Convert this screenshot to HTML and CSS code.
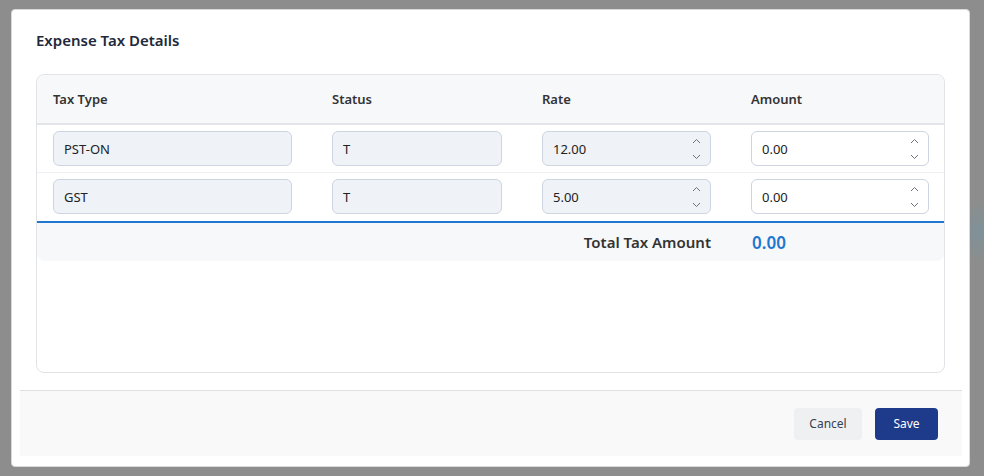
FILE: index.html
```html
<!DOCTYPE html>
<html>
<head>
    <title>Expense Tax Details</title>
    <meta name="viewport" content="width=device-width, initial-scale=1">
    <link rel="stylesheet" href="styles.css">
</head>
<body>
    <div class="backdrop">
        <div class="modal">
            <h2 class="modal-title">Expense Tax Details</h2>

            <div class="tax-table">
                <div class="tax-row tax-head">
                    <div class="cell">Tax Type</div>
                    <div class="cell">Status</div>
                    <div class="cell">Rate</div>
                    <div class="cell">Amount</div>
                </div>

                <div class="tax-row">
                    <div class="cell"><div class="field field-type"><span class="field-value">PST-ON</span></div></div>
                    <div class="cell"><div class="field field-status"><span class="field-value">T</span></div></div>
                    <div class="cell">
                        <div class="field field-rate">
                            <span class="field-value">12.00</span>
                            <span class="spinner">
                                <svg width="9" height="6" viewBox="0 0 9 6"><path d="M1 5 L4.5 1.5 L8 5" /></svg>
                                <svg width="9" height="6" viewBox="0 0 9 6"><path d="M1 1 L4.5 4.5 L8 1" /></svg>
                            </span>
                        </div>
                    </div>
                    <div class="cell">
                        <div class="field field-amount">
                            <span class="field-value">0.00</span>
                            <span class="spinner">
                                <svg width="9" height="6" viewBox="0 0 9 6"><path d="M1 5 L4.5 1.5 L8 5" /></svg>
                                <svg width="9" height="6" viewBox="0 0 9 6"><path d="M1 1 L4.5 4.5 L8 1" /></svg>
                            </span>
                        </div>
                    </div>
                </div>

                <div class="tax-row tax-row-last">
                    <div class="cell"><div class="field field-type"><span class="field-value">GST</span></div></div>
                    <div class="cell"><div class="field field-status"><span class="field-value">T</span></div></div>
                    <div class="cell">
                        <div class="field field-rate">
                            <span class="field-value">5.00</span>
                            <span class="spinner">
                                <svg width="9" height="6" viewBox="0 0 9 6"><path d="M1 5 L4.5 1.5 L8 5" /></svg>
                                <svg width="9" height="6" viewBox="0 0 9 6"><path d="M1 1 L4.5 4.5 L8 1" /></svg>
                            </span>
                        </div>
                    </div>
                    <div class="cell">
                        <div class="field field-amount">
                            <span class="field-value">0.00</span>
                            <span class="spinner">
                                <svg width="9" height="6" viewBox="0 0 9 6"><path d="M1 5 L4.5 1.5 L8 5" /></svg>
                                <svg width="9" height="6" viewBox="0 0 9 6"><path d="M1 1 L4.5 4.5 L8 1" /></svg>
                            </span>
                        </div>
                    </div>
                </div>

                <div class="tax-total">
                    <div class="total-label">Total Tax Amount</div>
                    <div class="total-value">0.00</div>
                </div>
            </div>

            <div class="modal-footer">
                <button class="btn btn-light">Cancel</button>
                <button class="btn btn-primary">Save</button>
            </div>
        </div>
    </div>
</body>
</html>
```

FILE: styles.css
```css
body {
    margin: 0;
    font-family: "Noto Sans", "Open Sans", sans-serif;
    background: #8d8d8d;
    color: #1f2937;
}
.backdrop {
    width: 984px;
    height: 476px;
    padding: 9px 14px 0 11px;
    box-sizing: border-box;
    background:
        radial-gradient(ellipse 40px 30px at 984px 232px, rgba(110,150,165,0.5), transparent),
        #8d8d8d;
}
.modal {
    width: 959px;
    height: 458px;
    background: white;
    border: 1px solid #d9d9d9;
    border-radius: 4px;
    box-sizing: border-box;
    display: flex;
    flex-direction: column;
}
.modal-title {
    margin: 0;
    padding: 18px 24px 0;
    line-height: 24px;
    font-size: 15px;
    font-weight: 600;
    color: #1e293b;
}
.tax-table {
    margin: 22px 24px 0;
    height: 299px;
    flex: none;
    border: 1px solid #e1e3e6;
    border-radius: 8px;
    box-sizing: border-box;
}
.tax-row {
    display: grid;
    grid-template-columns: 279px 210px 209px 1fr;
    padding: 6px 0 6px;
    border-bottom: 1px solid #eef0f2;
}
.tax-row-last {
    padding-bottom: 7px;
    border-bottom: 2px solid #1f77d0;
}
.tax-head {
    height: 48px;
    padding: 0;
    align-items: center;
    background: #f7f8fa;
    border-bottom: 2px solid #e3e5e8;
    border-radius: 8px 8px 0 0;
    font-size: 13px;
    font-weight: 600;
    color: #333;
}
.cell {
    padding: 0 16px;
}
.field {
    height: 35px;
    box-sizing: border-box;
    border: 1px solid #cdd5e1;
    border-radius: 6px;
    background: #eff2f7;
    display: flex;
    align-items: center;
    justify-content: space-between;
    padding: 0 10px;
    font-size: 13px;
    color: #222;
}
.field-type { width: 239px; }
.field-status { width: 170px; }
.field-rate { width: 169px; }
.field-amount {
    width: 178px;
    background: white;
}
.spinner {
    display: flex;
    flex-direction: column;
    justify-content: space-between;
    height: 22px;
    margin-right: -1px;
}
.spinner svg {
    display: block;
    fill: none;
    stroke: #6b7280;
    stroke-width: 1;
}
.tax-total {
    display: grid;
    grid-template-columns: 699px 1fr;
    align-items: center;
    height: 38px;
    background: #f7f8fa;
    border-radius: 0 0 8px 8px;
}
.total-label {
    text-align: right;
    padding-right: 25px;
    font-size: 15px;
    font-weight: 600;
    color: #333;
}
.total-value {
    padding-left: 16px;
    font-size: 17px;
    font-weight: 600;
    color: #1f77d0;
}
.modal-footer {
    margin: 17px 7px 10px 8px;
    flex: 1;
    background: #f9f9f9;
    border-top: 1px solid #e0e0e0;
    display: flex;
    justify-content: flex-end;
    align-items: center;
    gap: 13px;
    padding: 0 24px 0 0;
}
.btn {
    height: 32px;
    border: none;
    border-radius: 4px;
    font-family: inherit;
    font-size: 12px;
    cursor: pointer;
}
.btn-light {
    width: 68px;
    background: #eff0f2;
    color: #374151;
}
.btn-primary {
    width: 63px;
    background: #1e3a8a;
    color: white;
}
```
